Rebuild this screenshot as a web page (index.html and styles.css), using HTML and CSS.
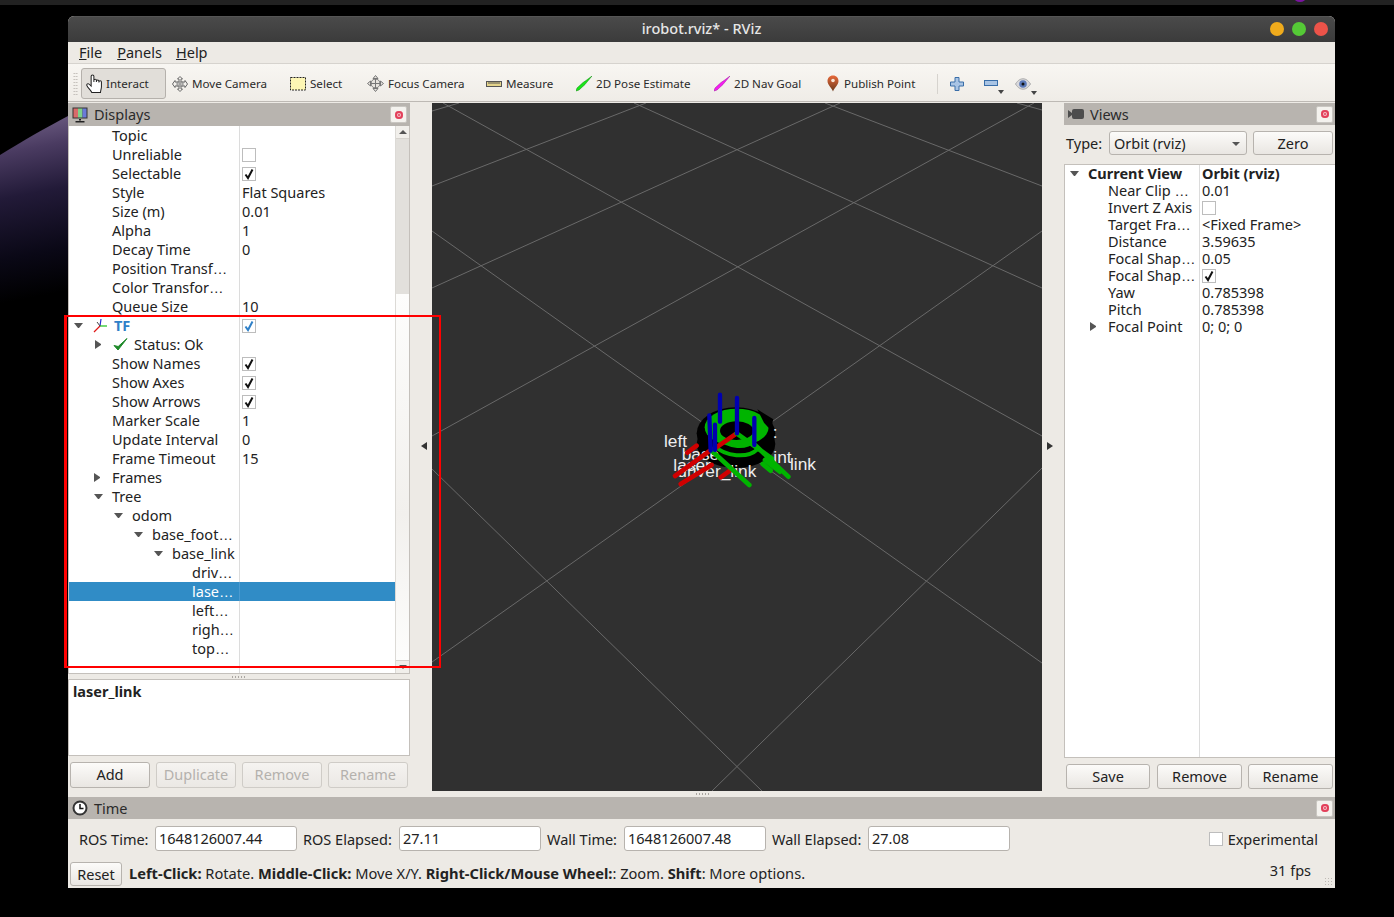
FILE: index.html
```html
<!DOCTYPE html>
<html lang="en">
<head>
<meta charset="utf-8">
<title>irobot.rviz* - RViz</title>
<link rel="stylesheet" href="styles.css">
</head>
<body>
<svg class="wallpaper" width="68" height="917" viewBox="0 0 68 917">
  <defs>
    <linearGradient id="planet" x1="40" y1="122" x2="72" y2="290" gradientUnits="userSpaceOnUse">
      <stop offset="0" stop-color="#66567c"/>
      <stop offset=".14" stop-color="#4a3b61"/>
      <stop offset=".4" stop-color="#221a38"/>
      <stop offset=".75" stop-color="#0a0816"/>
      <stop offset="1" stop-color="#000"/>
    </linearGradient>
  </defs>
  <path d="M0 155C24 140 47 127 68 116V340H0Z" fill="url(#planet)"/>
</svg>
<div class="topbar"><span class="tray-dot"></span></div>
<div class="window">
  <div class="titlebar">
    <span class="title">irobot.rviz* - RViz</span>
    <span class="wbtns"><i class="wb min"></i><i class="wb max"></i><i class="wb cls"></i></span>
  </div>
  <div class="menubar">
    <span class="menu"><u>F</u>ile</span><span class="menu"><u>P</u>anels</span><span class="menu"><u>H</u>elp</span>
  </div>
  <div class="toolbar">
    <span class="grip"></span>
    <div class="tool active w-int">
      <svg class="ic" width="16" height="19" viewBox="0 0 14 18" preserveAspectRatio="none"><path d="M4.5 9V2.2a1.2 1.2 0 0 1 2.4 0V7.500V6a1.1 1.1 0 0 1 2.200 0v1.500V6.800a1.100 1.100 0 0 1 2.200 0V8V7.500a1.100 1.100 0 0 1 2.200 0V12c0 2-.8 3.500-.8 5.500H5C4.500 15.500 1.500 13 .8 11c-.5-1.500 1-2.300 2-1.300L4.500 11.500Z" fill="#fff" stroke="#222" stroke-width=".9"/></svg>
      <span>Interact</span>
    </div>
    <div class="tool w-move">
      <svg class="ic" width="16" height="16" viewBox="0 0 16 16" fill="none" stroke="#666" stroke-width="1"><path d="M8 .5 5.500 3H7V6H3V4.500L.5 8 3 11.500V10H7v3H5.500L8 15.500 10.500 13H9V10h4v1.500L15.500 8 13 4.500V6H9V3h1.500Z" fill="#f4f2ee"/><path d="M5 6h6v4H5zM8 6v4M5 8h6" stroke="#888"/></svg>
      <span>Move Camera</span>
    </div>
    <div class="tool w-sel">
      <svg class="ic" width="16" height="16" viewBox="0 0 16 16"><rect x=".5" y="1.500" width="15" height="12.500" fill="#fdf6b4" stroke="#222" stroke-dasharray="2 1"/></svg>
      <span>Select</span>
    </div>
    <div class="tool w-foc">
      <svg class="ic" width="17" height="17" viewBox="0 0 17 17" fill="none" stroke="#777"><path d="M8.500 .5 11 3.500H6ZM8.500 16.500 11 13.500H6ZM.5 8.500 3.500 6V11ZM16.500 8.500 13.500 6V11Z" fill="#e6e3de"/><circle cx="8.500" cy="8.500" r="4.500" fill="#e6e3de"/><path d="M8.500 3v11M3 8.500h11"/></svg>
      <span>Focus Camera</span>
    </div>
    <div class="tool w-mea">
      <svg class="ic" width="16" height="16" viewBox="0 0 16 16"><rect x=".5" y="5.500" width="15" height="5" fill="#e4d48c" stroke="#555"/><path d="M3 6v2M5 6v2M7 6v2M9 6v2M11 6v2M13 6v2" stroke="#555"/></svg>
      <span>Measure</span>
    </div>
    <div class="tool w-pose">
      <svg class="ic" width="16" height="16" viewBox="0 0 16 16"><path d="M16 0 10 4.500 7 6.500 1 12 0 15 3 14 9 8.500 11 6Z" fill="#19e619" stroke="#0a8a0a" stroke-width=".5"/></svg>
      <span>2D Pose Estimate</span>
    </div>
    <div class="tool w-nav">
      <svg class="ic" width="16" height="16" viewBox="0 0 16 16"><path d="M16 0 10 4.500 7 6.500 1 12 0 15 3 14 9 8.500 11 6Z" fill="#f51df0" stroke="#a010a0" stroke-width=".5"/></svg>
      <span>2D Nav Goal</span>
    </div>
    <div class="tool w-pub">
      <svg class="ic" width="14" height="17" viewBox="0 0 14 17"><defs><linearGradient id="pin" x1="0" y1="0" x2="0" y2="1"><stop offset="0" stop-color="#e8693a"/><stop offset="1" stop-color="#6b3a1c"/></linearGradient></defs><path d="M7 .5C3.500.5 1.500 3 1.500 6c0 4 4 6.500 5.500 10.500C8.500 12.500 12.500 10 12.500 6 12.500 3 10.500.5 7 .5Z" fill="url(#pin)"/><circle cx="7" cy="5.500" r="1.800" fill="#f8e4d4"/></svg>
      <span>Publish Point</span>
    </div>
    <span class="tb-sep"></span>
    <svg class="tb-plus" width="14" height="14" viewBox="0 0 14 14"><path d="M5 .5h4V5h4.500v4H9v4.500H5V9H.5V5H5Z" fill="#a9c4e4" stroke="#3a6ea8"/></svg>
    <span class="tb-drop d-minus"><svg width="14" height="7" viewBox="0 0 14 7"><rect x=".5" y=".5" width="13" height="5" fill="#a9c4e4" stroke="#3a6ea8"/></svg><i class="mini"></i></span>
    <span class="tb-drop d-eye"><svg width="16" height="12" viewBox="0 0 16 12"><path d="M.5 6C3 2 5.500.8 8 .8S13 2 15.500 6C13 10 10.500 11.200 8 11.200S3 10 .5 6Z" fill="#d8d8dc" stroke="#aaa"/><circle cx="8" cy="6" r="3.800" fill="#5b79b8"/><circle cx="8" cy="6" r="1.500" fill="#111"/></svg><i class="mini"></i></span>
  </div>

  <div class="main">
    <section class="left-dock">
      <header class="dock-head">
        <svg class="dock-ic" width="16" height="16" viewBox="0 0 16 16"><rect x=".5" y=".5" width="15" height="11" fill="#333"/><rect x="1.500" y="1.500" width="4.500" height="9" fill="#d96a6a"/><rect x="6" y="1.500" width="4.500" height="9" fill="#7fd08a"/><rect x="10.500" y="1.500" width="4" height="9" fill="#6a7ad8"/><path d="M7 12h2v1.500H7ZM3.500 14h9v1.500h-9Z" fill="#222"/></svg>
        <span class="dock-title">Displays</span>
        <span class="close"><i></i></span>
      </header>
      <div class="tree">
        <div class="tree-body">
          <div class="row"><div class="nm l0">Topic</div><div class="val"></div></div>
          <div class="row"><div class="nm l0">Unreliable</div><div class="val"><span class="cb"></span></div></div>
          <div class="row"><div class="nm l0">Selectable</div><div class="val"><span class="cb"><svg width="12" height="12" viewBox="0 0 12 12"><path d="M2.500 6.500 5 10 9.500 1.500" fill="none" stroke="#111" stroke-width="2"/></svg></span></div></div>
          <div class="row"><div class="nm l0">Style</div><div class="val">Flat Squares</div></div>
          <div class="row"><div class="nm l0">Size (m)</div><div class="val">0.01</div></div>
          <div class="row"><div class="nm l0">Alpha</div><div class="val">1</div></div>
          <div class="row"><div class="nm l0">Decay Time</div><div class="val">0</div></div>
          <div class="row"><div class="nm l0"><span class="tx">Position Transf<span class="el">…</span></span></div><div class="val"></div></div>
          <div class="row"><div class="nm l0"><span class="tx">Color Transfor<span class="el">…</span></span></div><div class="val"></div></div>
          <div class="row"><div class="nm l0">Queue Size</div><div class="val">10</div></div>
          <div class="row"><div class="nm tf"><span class="ar down"></span><svg class="tf-ic" width="16" height="16" viewBox="0 0 16 16" fill="none"><path d="M8 8 9 1" stroke="#2a2ad0" stroke-width="1.200"/><path d="M8 8h7" stroke="#18c018" stroke-width="1.200"/><path d="M8 8 2 14" stroke="#e01818" stroke-width="1.200"/><path d="M5 4 8 8" stroke="#444"/></svg><b class="blue">TF</b></div><div class="val"><span class="cb"><svg width="12" height="12" viewBox="0 0 12 12"><path d="M2.500 6.500 5 10 9.500 1.500" fill="none" stroke="#2f80c8" stroke-width="2"/></svg></span></div></div>
          <div class="row"><div class="nm st"><span class="ar right"></span><svg class="ok-ic" width="15" height="15" viewBox="0 0 15 15"><path d="M1 8.500 5 13 14 1.500 5.200 9.500Z" fill="#1f8a2a" stroke="#1f8a2a"/></svg>Status: Ok</div><div class="val"></div></div>
          <div class="row"><div class="nm l0">Show Names</div><div class="val"><span class="cb"><svg width="12" height="12" viewBox="0 0 12 12"><path d="M2.500 6.500 5 10 9.500 1.500" fill="none" stroke="#111" stroke-width="2"/></svg></span></div></div>
          <div class="row"><div class="nm l0">Show Axes</div><div class="val"><span class="cb"><svg width="12" height="12" viewBox="0 0 12 12"><path d="M2.500 6.500 5 10 9.500 1.500" fill="none" stroke="#111" stroke-width="2"/></svg></span></div></div>
          <div class="row"><div class="nm l0">Show Arrows</div><div class="val"><span class="cb"><svg width="12" height="12" viewBox="0 0 12 12"><path d="M2.500 6.500 5 10 9.500 1.500" fill="none" stroke="#111" stroke-width="2"/></svg></span></div></div>
          <div class="row"><div class="nm l0">Marker Scale</div><div class="val">1</div></div>
          <div class="row"><div class="nm l0">Update Interval</div><div class="val">0</div></div>
          <div class="row"><div class="nm l0">Frame Timeout</div><div class="val">15</div></div>
          <div class="row"><div class="nm l0"><span class="ar right"></span>Frames</div><div class="val"></div></div>
          <div class="row"><div class="nm l0"><span class="ar down"></span>Tree</div><div class="val"></div></div>
          <div class="row"><div class="nm l1"><span class="ar down"></span>odom</div><div class="val"></div></div>
          <div class="row"><div class="nm l2"><span class="ar down"></span><span class="tx">base_foot<span class="el">…</span></span></div><div class="val"></div></div>
          <div class="row"><div class="nm l3"><span class="ar down"></span>base_link</div><div class="val"></div></div>
          <div class="row"><div class="nm l4"><span class="tx">driv<span class="el">…</span></span></div><div class="val"></div></div>
          <div class="row selected"><div class="nm l4"><span class="tx">lase<span class="el">…</span></span></div><div class="val"></div></div>
          <div class="row"><div class="nm l4"><span class="tx">left<span class="el">…</span></span></div><div class="val"></div></div>
          <div class="row"><div class="nm l4"><span class="tx">righ<span class="el">…</span></span></div><div class="val"></div></div>
          <div class="row"><div class="nm l4"><span class="tx">top<span class="el">…</span></span></div><div class="val"></div></div>
          <div class="row-fill"><div class="nm"></div></div>
        </div>
        <div class="scrollbar">
          <span class="sb-btn"><i class="up"></i></span>
          <span class="sb-thumb"></span>
          <span class="sb-track"></span>
          <span class="sb-btn"><i class="dn"></i></span>
        </div>
      </div>
      <div class="hsplit"><i></i></div>
      <div class="desc"><b>laser_link</b></div>
      <div class="btn-row left-btns">
        <button class="btn">Add</button>
        <button class="btn off">Duplicate</button>
        <button class="btn off">Remove</button>
        <button class="btn off">Rename</button>
      </div>
    </section>

    <div class="gutter gut-l"><i class="tri tri-l"></i></div>

    <div class="center">
      <svg class="view" width="610" height="688" viewBox="0 0 610 688">
        <g class="grid">
          <path d="M11 0 610 333M202 0 610 185M393 0 610 83M585 0 610 7M0 128 610 560M0 366 330 688"/>
          <path d="M27 0 0 8M214 0 0 83M408 0 0 185M602 0 0 333M610 128 0 559M610 365 280 688"/>
        </g>
        <g transform="translate(208 277) scale(.3333)">
          <ellipse cx="288" cy="192" rx="118" ry="72"/>
          <ellipse cx="288" cy="160" rx="118" ry="78"/>
          <ellipse class="gr" cx="290" cy="142" rx="96" ry="56"/>
          <ellipse cx="290" cy="152" rx="50" ry="28"/>
          <path d="M352 88 400 118 392 150 372 128Z"/>
          <path class="gr2" d="M222 195C255 232 325 235 352 208"/>
          <path class="gr2" d="M238 172C265 205 320 205 342 182"/>
          <g class="lbl">
            <text x="72" y="200">left</text>
            <text x="125" y="240">base</text>
            <text x="100" y="272">laser</text>
            <text x="112" y="292">driver_link</text>
            <text x="400" y="250">int</text>
            <text x="450" y="270">link</text>
            <text x="398" y="175">:</text>
          </g>
          <g class="ax red">
            <path d="M290 160 215 212M210 212 105 288M142 218 170 197M122 312 215 255M242 292 275 268"/>
          </g>
          <g class="ax green">
            <path d="M290 160 395 235M215 212 328 315M345 195 445 290M368 252 392 272M375 240 420 275"/>
          </g>
          <g class="ax blue">
            <path d="M240 44V125M291 54V160M208 106 212 212M225 134V210M343 114V195"/>
          </g>
        </g>
      </svg>
      <div class="vsplit"><i></i></div>
    </div>

    <div class="gutter gut-r"><i class="tri tri-r"></i></div>

    <section class="right-dock">
      <header class="dock-head rhead">
        <svg class="dock-ic" width="16" height="10" viewBox="0 0 16 10"><path d="M0 1 4 4V2q0-2 2-2h8q2 0 2 2v6q0 2-2 2H6q-2 0-2-2V6L0 9Z" fill="#4d4d4d"/></svg>
        <span class="dock-title">Views</span>
        <span class="close"><i></i></span>
      </header>
      <div class="type-row">
        <span class="type-lbl">Type:</span>
        <span class="combo">Orbit (rviz)<i></i></span>
        <button class="btn zero">Zero</button>
      </div>
      <div class="rtree">
        <div class="rrow"><div class="rnm r0"><span class="ar down"></span><b>Current View</b></div><div class="rval"><b>Orbit (rviz)</b></div></div>
        <div class="rrow"><div class="rnm r1"><span class="tx">Near Clip <span class="el">…</span></span></div><div class="rval">0.01</div></div>
        <div class="rrow"><div class="rnm r1">Invert Z Axis</div><div class="rval"><span class="cb"></span></div></div>
        <div class="rrow"><div class="rnm r1"><span class="tx">Target Fra<span class="el">…</span></span></div><div class="rval">&lt;Fixed Frame&gt;</div></div>
        <div class="rrow"><div class="rnm r1">Distance</div><div class="rval">3.59635</div></div>
        <div class="rrow"><div class="rnm r1"><span class="tx">Focal Shap<span class="el">…</span></span></div><div class="rval">0.05</div></div>
        <div class="rrow"><div class="rnm r1"><span class="tx">Focal Shap<span class="el">…</span></span></div><div class="rval"><span class="cb"><svg width="12" height="12" viewBox="0 0 12 12"><path d="M2.500 6.500 5 10 9.500 1.500" fill="none" stroke="#111" stroke-width="2"/></svg></span></div></div>
        <div class="rrow"><div class="rnm r1">Yaw</div><div class="rval">0.785398</div></div>
        <div class="rrow"><div class="rnm r1">Pitch</div><div class="rval">0.785398</div></div>
        <div class="rrow"><div class="rnm r1"><span class="ar right"></span>Focal Point</div><div class="rval">0; 0; 0</div></div>
        <div class="rfill"><div class="rnm"></div></div>
      </div>
      <div class="btn-row right-btns">
        <button class="btn b-save">Save</button>
        <button class="btn b-rem">Remove</button>
        <button class="btn b-ren">Rename</button>
      </div>
    </section>
  </div>

  <div class="dock-head time-head">
    <svg class="dock-ic" width="16" height="16" viewBox="0 0 16 16"><circle cx="8" cy="8" r="6.500" fill="#fff" stroke="#333" stroke-width="2"/><path d="M8 4v4.500h3.500" fill="none" stroke="#111" stroke-width="1.500"/></svg>
    <span class="dock-title">Time</span>
    <span class="close"><i></i></span>
  </div>
  <div class="time-row">
    <span class="t-lbl l-a">ROS Time:</span><span class="field">1648126007.44</span>
    <span class="t-lbl l-b">ROS Elapsed:</span><span class="field">27.11</span>
    <span class="t-lbl l-c">Wall Time:</span><span class="field">1648126007.48</span>
    <span class="t-lbl l-d">Wall Elapsed:</span><span class="field">27.08</span>
    <span class="exp"><span class="cb"></span>Experimental</span>
  </div>
  <div class="status-row">
    <button class="btn reset">Reset</button>
    <span class="hint"><b>Left-Click:</b> Rotate. <b>Middle-Click:</b> Move X/Y. <b>Right-Click/Mouse Wheel:</b>: Zoom. <b>Shift</b>: More options.</span>
    <span class="fps">31 fps</span>
  </div>
  <span class="sizegrip"></span>
</div>
<div class="annotation"></div>
</body>
</html>
```
FILE: styles.css
```css
* { box-sizing: border-box; }
html, body { margin: 0; height: 917px; overflow: hidden; }
body {
  position: relative;
  background: #000;
  font-family: "Noto Sans", "Open Sans", sans-serif;
  font-size: 14.5px;
  color: #222;
}
.tx { display: block; }
.el { font-family: "Liberation Sans", sans-serif; }
.wallpaper { position: absolute; left: 0; top: 0; }
.topbar { position: relative; height: 5px; background: #222; overflow: hidden; }
.tray-dot { position: absolute; left: 1294px; top: -7px; width: 12px; height: 9px; border-radius: 50%; background: #7a14a0; }

.window {
  position: relative;
  width: 1267px;
  height: 872px;
  margin: 11px 0 0 68px;
  background: #edeae5;
  border-radius: 6px 6px 0 0;
  overflow: hidden;
}
.titlebar {
  position: relative;
  height: 26px;
  padding-bottom: 4px;
  background: linear-gradient(#4a4a4a, #444 40%, #3b3b3b);
  border-top: 1px solid #555;
  display: flex;
  justify-content: center;
  align-items: center;
}
.title { color: #e6e6e6; font-size: 14.5px; font-weight: 500; }
.wbtns { position: absolute; right: 7px; top: 5px; display: flex; gap: 8px; }
.wb { display: block; width: 14px; height: 14px; border-radius: 50%; }
.min { background: #f0ab1c; }
.max { background: #55c936; }
.cls { background: #ec5349; }

.menubar {
  height: 22px;
  padding: 0 0 2px 11px;
  display: flex;
  gap: 14px;
  align-items: center;
  border-bottom: 1px solid #d6d3ce;
}
.menu:nth-child(2) { margin-left: 1px; }

.toolbar {
  height: 38px;
  padding-top: 2px;
  background: linear-gradient(#f8f6f2, #efece7);
  border-bottom: 1px solid #bdb9b4;
  display: flex;
  align-items: center;
  font-size: 11.6px;
  color: #2a2a2a;
}
.grip {
  width: 5px;
  height: 24px;
  margin: 0 3px 0 5px;
  background: radial-gradient(circle, #bdb9b4 0.6px, transparent 1px) 0 0 / 2.500px 3px;
}
.tool { display: flex; align-items: center; height: 31px; padding-left: 5px; flex: none; }
.tool .ic { margin-right: 4px; flex: none; }
.active { background: #e1ded9; border: 1px solid #b5b1ac; border-radius: 3px; padding-left: 4px; margin-right: 1px; }
.w-int { width: 85px; }
.w-move { width: 118px; }
.w-sel { width: 77px; }
.w-foc { width: 119px; }
.w-mea { width: 90px; }
.w-pose { width: 138px; }
.w-nav { width: 112px; }
.w-pub { width: 116px; }
.tb-sep { width: 1px; height: 20px; background: #d6d3ce; flex: none; }
.tb-plus { margin-left: 12px; flex: none; }
.tb-drop { position: relative; display: flex; align-items: center; flex: none; }
.d-minus { margin-left: 20px; }
.d-eye { margin-left: 17px; }
.mini {
  position: absolute;
  border: 3px solid transparent;
  border-top: 4px solid #444;
  border-bottom: 0;
}
.d-minus .mini { bottom: -7px; right: -6px; }
.d-eye .mini { bottom: -5px; right: -6px; }

.main { display: flex; height: 694px; margin-top: 1px; }
.left-dock { width: 342px; display: flex; flex-direction: column; flex: none; }
.right-dock { width: 271px; display: flex; flex-direction: column; flex: none; }
.gutter { width: 22px; flex: none; display: flex; align-items: center; justify-content: center; padding-bottom: 8px; }
.gut-l { padding-left: 6px; }
.gut-r { padding-right: 6px; }
.tri { display: block; border: 4px solid transparent; }
.tri-l { border-right: 6px solid #333; border-left: 0; }
.tri-r { border-left: 6px solid #333; border-right: 0; }
.center { width: 610px; flex: none; display: flex; flex-direction: column; }
.view { display: block; background: #303030; flex: none; }
.vsplit { height: 6px; padding-left: 263px; display: flex; align-items: center; }
.hsplit { justify-content: center; }
.vsplit i, .hsplit i {
  display: block;
  width: 16px;
  height: 2px;
  background: radial-gradient(circle, #aaa6a1 0.6px, transparent 1px) 0 0 / 3px 2px;
}

.dock-head {
  height: 23px;
  background: #b8b4af;
  display: flex;
  align-items: center;
  padding-left: 4px;
  flex: none;
}
.rhead { height: 22px; }
.time-head { height: 22px; }
.dock-ic { margin-right: 6px; flex: none; }
.dock-title { color: #2b2b2b; }
.left-dock .dock-title { margin-top: -2px; }
.close {
  margin-left: auto;
  margin-right: 3px;
  width: 17px;
  height: 17px;
  background: #f4f2ee;
  border: 1px solid #c9c6c1;
  border-radius: 2px;
  display: flex;
  align-items: center;
  justify-content: center;
}
.close i {
  display: block;
  width: 8px;
  height: 8px;
  border-radius: 50%;
  background: #e2405a;
  box-shadow: inset 0 0 0 2px #e2405a, inset 0 0 0 3px #f7c3cc;
}
.rhead .close, .time-head .close { margin-right: 2px; }

.tree {
  height: 548px;
  display: flex;
  border: 1px solid #c4c0bb;
  border-top: 0;
  background: #fff;
  flex: none;
}
.tree-body { width: 326px; display: flex; flex-direction: column; flex: none; }
.row { display: flex; height: 19px; line-height: 19px; flex: none; white-space: nowrap; }
.row-fill { flex: 1; display: flex; }
.nm {
  width: 171px;
  border-right: 1px solid #dcdcdc;
  flex: none;
  display: flex;
  align-items: center;
}
.val { flex: 1; padding-left: 2px; display: flex; align-items: center; }
.l0 { padding-left: 43px; }
.l1 { padding-left: 63px; }
.l2 { padding-left: 83px; }
.l3 { padding-left: 103px; }
.l4 { padding-left: 123px; }
.tf { padding-left: 23px; }
.st { padding-left: 44px; }
.tf-ic { margin-right: 6px; flex: none; }
.ok-ic { margin-right: 6px; flex: none; }
.blue { color: #2f80c8; }
.selected { background: #308cc6; color: #fff; }
.selected .nm { border-right-color: #4a9ad0; }
.ar { display: block; flex: none; width: 9px; margin-left: -18px; margin-right: 9px; border: solid transparent; }
.ar.down { height: 5px; border-width: 5px 4.500px 0; border-top-color: #555; }
.ar.right { width: 9px; height: 9px; border-width: 4.500px 0 4.500px 6px; border-left-color: #555; }
.cb {
  display: flex;
  width: 14px;
  height: 14px;
  border: 1px solid #bdbdbd;
  background: #fff;
  align-items: center;
  justify-content: center;
  flex: none;
}
.scrollbar { width: 14px; display: flex; flex-direction: column; flex: none; border-left: 1px solid #dcdad6; }
.sb-btn { height: 13px; background: #f1efeb; border: solid #d6d3ce; border-width: 0 0 1px; display: flex; align-items: center; justify-content: center; flex: none; }
.sb-btn:last-child { border-width: 1px 0 0; }
.sb-btn i { display: block; border: 4px solid transparent; }
.sb-btn .up { border-top: 0; border-bottom: 4px solid #555; }
.sb-btn .dn { border-bottom: 0; border-top: 4px solid #555; }
.sb-thumb { height: 155px; background: #e2e0dc; flex: none; }
.sb-track { flex: 1; background: linear-gradient(#fdfdfc, #f2f0ed 60%, #fdfdfc); }

.hsplit { height: 5px; display: flex; align-items: center; flex: none; }
.desc {
  height: 77px;
  background: #fff;
  border: 1px solid #c4c0bb;
  padding: 2px 4px;
  line-height: 19px;
  flex: none;
}
.btn-row { display: flex; flex: none; }
.left-btns { margin-top: 6px; padding-left: 2px; gap: 6px; }
.btn {
  height: 26px;
  font: inherit;
  color: #222;
  background: linear-gradient(#fcfbf9, #e9e6e2);
  border: 1px solid #b7b3ae;
  border-radius: 3px;
  padding: 0;
}
.left-btns .btn { width: 80px; padding-bottom: 2px; }
.off { color: #b4b1ad; border-color: #cfccc7; background: linear-gradient(#f5f3f0, #ebe8e4); }

.type-row { display: flex; align-items: center; height: 24px; margin-top: 6px; padding-left: 2px; flex: none; }
.type-lbl { width: 43px; flex: none; }
.combo {
  position: relative;
  width: 138px;
  height: 24px;
  line-height: 22px;
  padding-left: 4px;
  background: linear-gradient(#fcfbf9, #e9e6e2);
  border: 1px solid #b7b3ae;
  border-radius: 3px;
  flex: none;
}
.combo i {
  position: absolute;
  right: 6px;
  top: 10px;
  border: 4px solid transparent;
  border-top: 4px solid #555;
  border-bottom: 0;
}
.zero { width: 80px; height: 24px; margin-left: 6px; }
.rtree {
  height: 594px;
  margin-top: 9px;
  background: #fff;
  border: 1px solid #c4c0bb;
  border-right: 0;
  display: flex;
  flex-direction: column;
  flex: none;
}
.rrow { display: flex; height: 17px; line-height: 17px; flex: none; white-space: nowrap; }
.rfill { flex: 1; display: flex; }
.rnm { width: 135px; border-right: 1px solid #dcdcdc; flex: none; display: flex; align-items: center; }
.rval { flex: 1; padding-left: 2px; display: flex; align-items: center; }
.r0 { padding-left: 23px; }
.r1 { padding-left: 43px; }
.right-btns { margin-top: 6px; padding-left: 2px; }
.right-btns .btn { height: 25px; padding-bottom: 2px; }
.b-save { width: 84px; }
.b-rem { width: 85px; margin-left: 7px; }
.b-ren { width: 85px; margin-left: 6px; }

.time-row { display: flex; align-items: center; height: 25px; margin-top: 7px; padding-left: 11px; flex: none; }
.t-lbl { flex: none; }
.l-a { width: 76px; }
.l-b { width: 96px; margin-left: 6px; }
.l-c { width: 77px; margin-left: 6px; }
.l-d { width: 96px; margin-left: 6px; }
.field {
  width: 142px;
  height: 25px;
  line-height: 23px;
  padding-left: 3px;
  background: #fff;
  border: 1px solid #b7b3ae;
  border-radius: 3px;
  flex: none;
}
.exp { margin-left: auto; padding-right: 17px; display: flex; align-items: center; gap: 5px; }
.status-row { display: flex; height: 24px; margin-top: 11px; padding-left: 2px; align-items: center; flex: none; }
.reset { width: 52px; height: 24px; padding-bottom: 1px; }
.hint { margin: -3px 0 0 7px; font-size: 14.65px; }
.fps { margin-left: auto; padding-right: 24px; margin-top: -8px; }
.sizegrip {
  position: absolute;
  right: 1px;
  bottom: 1px;
  width: 10px;
  height: 10px;
  background: radial-gradient(circle, #bdb9b4 0.6px, transparent 1px) 0 0 / 3px 3px;
}

.grid path { fill: none; stroke: #696969; stroke-width: 1; }
.gr { fill: #00b400; }
.gr2 { fill: none; stroke: #00b400; stroke-width: 12; }
.ax path { fill: none; stroke-width: 14; stroke-linecap: round; }
.red path { stroke: #d00000; }
.green path { stroke: #00b400; }
.blue path { stroke: #0000b0; stroke-width: 13; }
.lbl text { fill: #eee; font-family: "Liberation Sans", sans-serif; font-size: 52px; }

.annotation {
  position: absolute;
  left: 64px;
  top: 315px;
  width: 377px;
  height: 353px;
  border: solid #f00;
  border-width: 2px 2px 2px 3px;
}
```
